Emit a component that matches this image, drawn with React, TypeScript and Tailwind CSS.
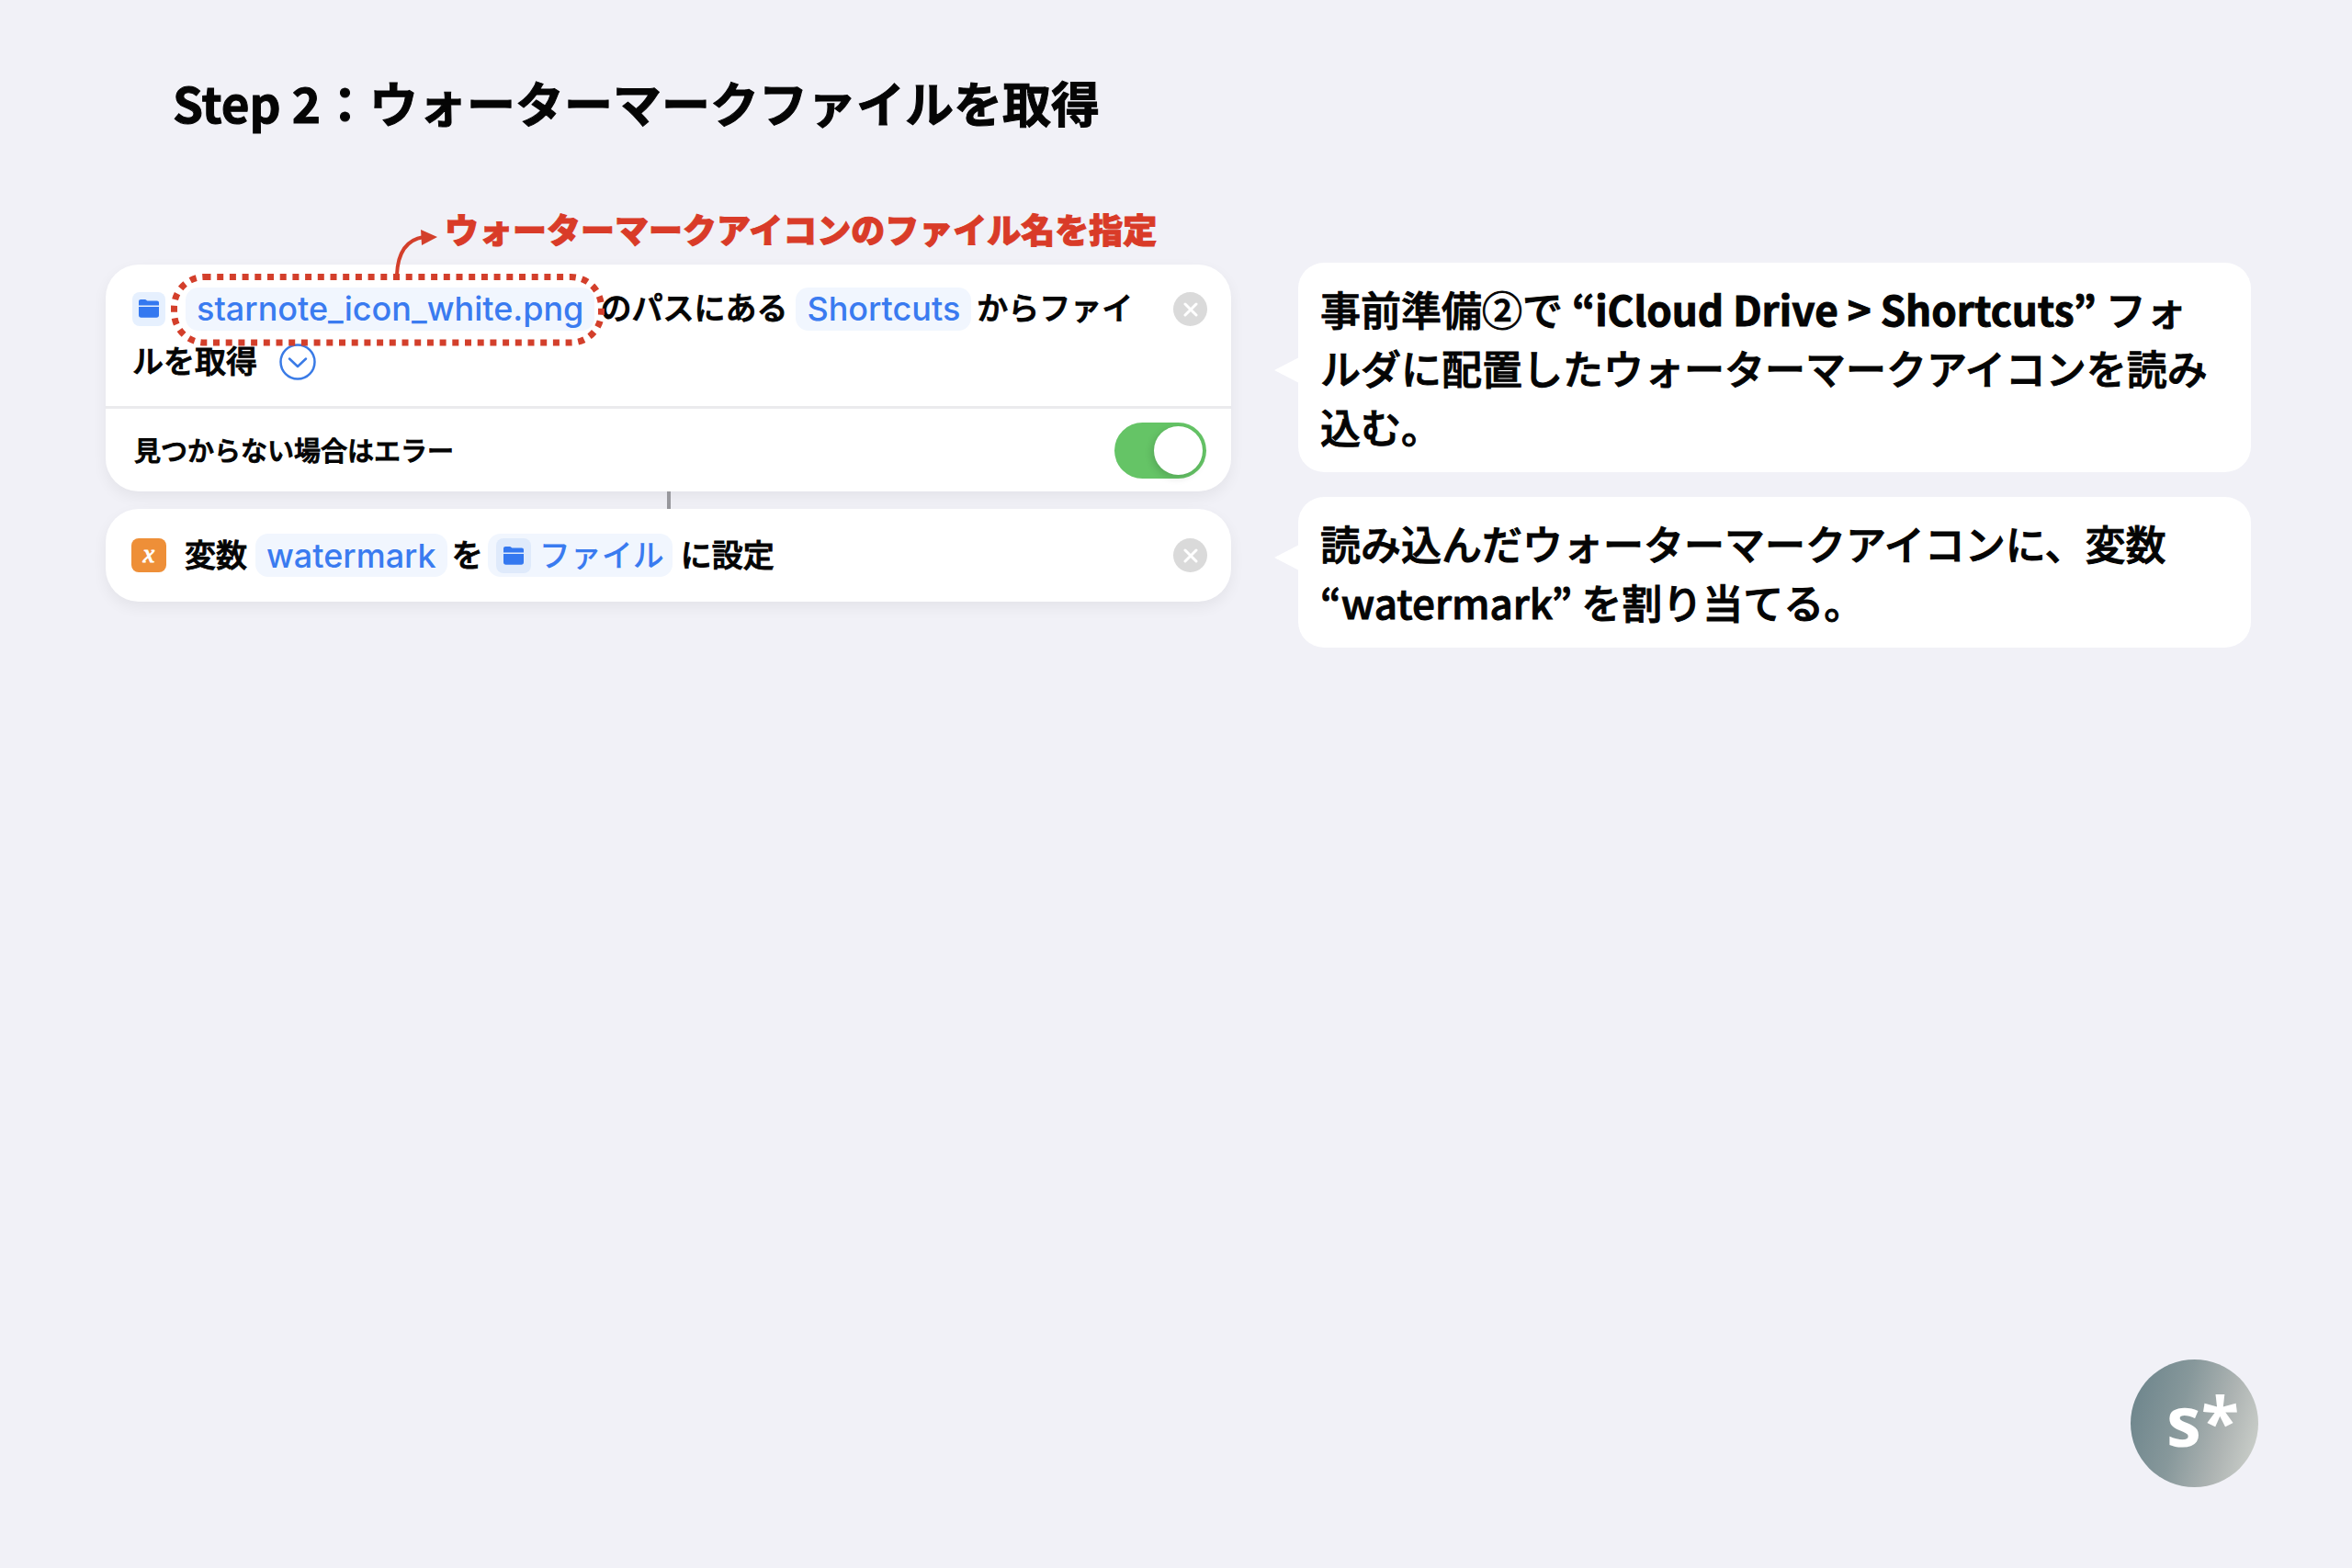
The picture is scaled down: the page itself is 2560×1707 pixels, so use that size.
import { ReactNode } from "react";

const FolderIcon = () => (
  <svg width="24" height="22" viewBox="0 0 24 22" fill="currentColor" aria-hidden="true">
    <path d="M1 7.500V3.200C1 1.700 1.900 1 3.300 1H7.300C8.400 1 8.900 1.300 9.600 1.900L10.400 2.500H20.800C22.200 2.500 23 3.300 23 4.600V7.500Z" />
    <path d="M1 9H23V18C23 19.800 22.100 20.700 20.300 20.700H3.700C1.900 20.700 1 19.800 1 18Z" />
  </svg>
);

const CrossIcon = () => (
  <svg width="16" height="16" viewBox="0 0 16 16" fill="none" stroke="currentColor" strokeWidth="3" strokeLinecap="round" aria-hidden="true">
    <path d="M2 2L14 14M14 2L2 14" />
  </svg>
);

/** Dotted ring around the file name, with the arrow that leads up to the note. */
const Highlight = () => (
  <svg
    width="472"
    height="136"
    viewBox="0 0 472 136"
    fill="none"
    stroke="#d33f2b"
    aria-hidden="true"
    className="pointer-events-none absolute -left-4 -top-[72px]"
  >
    <rect x="3.500" y="60.500" width="465" height="71.500" rx="33" strokeWidth="7" strokeDasharray="7 6.700" />
    <path d="M246 58C247 35 256 20 275 17" strokeWidth="4" />
    <path d="M272 9L290 17L273 26Z" fill="#d33f2b" stroke="none" />
  </svg>
);

function Token({ children }: { children: ReactNode }) {
  return (
    <button
      type="button"
      className="flex h-[47px] shrink-0 items-center rounded-[14px] bg-[#f1f6fe] px-3 text-[36px] text-[#3a7bf0]"
    >
      {children}
    </button>
  );
}

function RemoveButton() {
  return (
    <button
      type="button"
      aria-label="削除"
      className="flex size-[37px] shrink-0 items-center justify-center rounded-full bg-[#dadada] text-white"
    >
      <CrossIcon />
    </button>
  );
}

function Note({ children, tail }: { children: ReactNode; tail: string }) {
  return (
    <div className="relative rounded-[28px] bg-white py-[18px] pl-6 pr-10">
      <svg
        width="27"
        height="28"
        viewBox="0 0 27 28"
        fill="#fff"
        aria-hidden="true"
        className={`absolute -left-[26px] ${tail}`}
      >
        <path d="M0 14L27 0V28Z" />
      </svg>
      <p className="text-[44px] leading-[64px] [-webkit-text-stroke:1px]">{children}</p>
    </div>
  );
}

const cardClass = "rounded-[36px] bg-white shadow-[0_6px_16px_rgba(0,0,0,0.06)]";
const actionClass = "whitespace-nowrap font-['Inter','Noto_Sans_CJK_JP',sans-serif] text-[34px] leading-[58px]";
const wordClass = "[-webkit-text-stroke:1px]";

export default function App() {
  return (
    <div className="flex min-h-screen flex-col bg-[#f1f1f7] font-['Noto_Sans_CJK_JP',sans-serif] font-medium text-[#050505]">
      <h1 className="pl-[188px] pt-[71px] text-[53px] font-bold leading-[80px] [-webkit-text-stroke:1px]">
        Step 2：ウォーターマークファイルを取得
      </h1>

      <main className="mt-[72px] grid grid-cols-[1225fr_1037fr] gap-[73px] pl-[115px] pr-[110px]">
        <section>
          <p className="mb-[13px] pl-[369px] text-[37px] font-black leading-[52px] text-[#d93b28] [-webkit-text-stroke:1px]">
            ウォーターマークアイコンのファイル名を指定
          </p>

          <div className={cardClass}>
            <div className="flex h-[154px] items-start justify-between pl-[29px] pr-[26px] pt-[19px]">
              <div className={actionClass}>
                <div className="flex h-[58px] items-center">
                  <span className="mr-[22px] flex h-[37px] w-9 items-center justify-center rounded-lg bg-[#e6f0fe] text-[#3478f0]">
                    <FolderIcon />
                  </span>
                  <div className="relative mr-[6px]">
                    <Token>starnote_icon_white.png</Token>
                    <Highlight />
                  </div>
                  <span className={`mr-[9px] ${wordClass}`}>のパスにある</span>
                  <Token>Shortcuts</Token>
                  <span className={`ml-[6px] ${wordClass}`}>からファイ</span>
                </div>
                <div className="flex h-[58px] items-center gap-[24px]">
                  <span className={wordClass}>ルを取得</span>
                  <button type="button" aria-label="詳細を表示" className="text-[#3a7be6]">
                    <svg width="40" height="40" viewBox="0 0 40 40" fill="none" stroke="currentColor" strokeWidth="2.500" strokeLinecap="round" strokeLinejoin="round">
                      <circle cx="20" cy="20" r="18.500" />
                      <path d="M11 16.500L20 25L29 16.500" />
                    </svg>
                  </button>
                </div>
              </div>
              <div className="pt-[11px]">
                <RemoveButton />
              </div>
            </div>

            <label className="flex h-[93px] items-center justify-between border-t-[3px] border-[#ebebed] pl-[31px] pr-[27px] text-[29px]">
              <span className={wordClass}>見つからない場合はエラー</span>
              <input type="checkbox" role="switch" defaultChecked className="peer sr-only" />
              <span className="flex h-[61px] w-[100px] items-center justify-end rounded-full bg-[#65c466] px-1">
                <span className="size-[53px] rounded-full bg-white shadow-[-2px_3px_8px_rgba(0,0,0,0.15)]" />
              </span>
            </label>
          </div>

          <div className="mx-auto h-[19px] w-1 bg-[#98989d]" />

          <div className={`${cardClass} flex h-[101px] items-center justify-between pl-[28px] pr-[26px]`}>
            <div className={`flex items-center ${actionClass}`}>
              <span className="mr-[20px] flex h-[37px] w-[38px] items-center justify-center rounded-lg bg-[#ee8f38] pb-1 font-['Liberation_Serif',serif] text-[28px] italic leading-none text-white [-webkit-text-stroke:1px]">
                x
              </span>
              <span className={`mr-[9px] ${wordClass}`}>変数</span>
              <Token>watermark</Token>
              <span className={`mx-[5px] ${wordClass}`}>を</span>
              <button
                type="button"
                className="flex h-[47px] items-center gap-[9px] rounded-[14px] bg-[#f1f6fe] px-[9px] text-[#3a7bf0]"
              >
                <span className="flex size-[38px] items-center justify-center rounded-lg bg-[#dfeafb] text-[#3478f0]">
                  <FolderIcon />
                </span>
                ファイル
              </button>
              <span className={`ml-[9px] ${wordClass}`}>に設定</span>
            </div>
            <RemoveButton />
          </div>
        </section>

        <section className="flex flex-col gap-[27px] pt-[63px]">
          <Note tail="top-[103px]">
            事前準備②で <b className="font-bold">“iCloud Drive &gt; Shortcuts”</b> フォルダに配置したウォーターマークアイコンを読み込む。
          </Note>
          <Note tail="top-[52px]">
            読み込んだウォーターマークアイコンに、変数 “watermark” を割り当てる。
          </Note>
        </section>
      </main>

      <footer className="mt-auto flex justify-end pb-[88px] pr-[102px]">
        <div className="flex size-[139px] items-center justify-center rounded-full bg-linear-[105deg,#6d858c_5%,#87989b_40%,#aeb4b3_70%,#ccd0cb_95%] pb-2 pl-[18px] font-['Open_Sans',sans-serif] text-[76px] font-bold leading-none text-white">
          s*
        </div>
      </footer>
    </div>
  );
}
